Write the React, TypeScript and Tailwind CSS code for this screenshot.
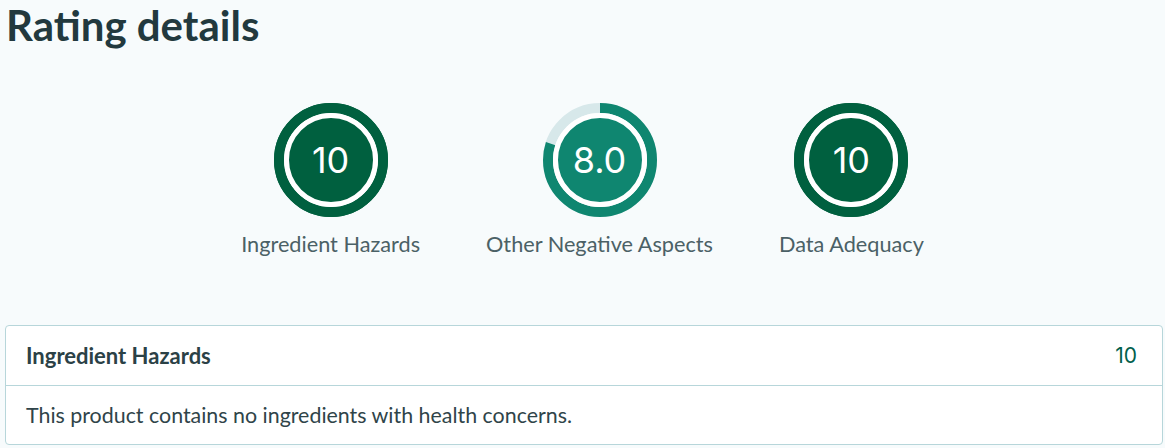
import React from 'react';

type Rating = {
  label: string;
  value: number;
  display: string;
  color: string;
  track: string;
};

const ratings: Rating[] = [
  { label: 'Ingredient Hazards', value: 10, display: '10', color: '#00603f', track: '#00603f' },
  { label: 'Other Negative Aspects', value: 8, display: '8.0', color: '#0f8670', track: '#d7e8ea' },
  { label: 'Data Adequacy', value: 10, display: '10', color: '#00603f', track: '#00603f' },
];

const RatingCircle: React.FC<{ rating: Rating }> = ({ rating }) => {
  const r = 52;
  const circumference = 2 * Math.PI * r;
  const progress = (rating.value / 10) * circumference;

  return (
    <div className="relative w-[116px] h-[116px]">
      <svg width="116" height="116" viewBox="0 0 116 116">
        <circle cx="58" cy="58" r={r} fill="none" stroke={rating.track} strokeWidth="10" />
        <circle
          cx="58"
          cy="58"
          r={r}
          fill="none"
          stroke={rating.color}
          strokeWidth="10"
          strokeDasharray={`${progress} ${circumference}`}
          transform="rotate(-90 58 58)"
        />
        <circle cx="58" cy="58" r="44.5" fill={rating.color} stroke="#ffffff" strokeWidth="5" />
      </svg>
      <span
        className="absolute inset-0 flex items-center justify-center text-white text-[36px] leading-none"
        style={{ fontFamily: 'Inter, "Open Sans", sans-serif', fontWeight: 400 }}
      >
        {rating.display}
      </span>
    </div>
  );
};

const App: React.FC = () => {
  return (
    <div
      className="w-[1165px] h-[448px] bg-[#f7fbfc] overflow-hidden"
      style={{ fontFamily: 'Lato, "Noto Sans", sans-serif' }}
    >
      <h1 className="px-[6px] text-[42px] leading-[51px] font-bold text-[#22393e]">Rating details</h1>

      <div className="flex justify-center gap-[66px] mt-[51px]">
        {ratings.map(rating => (
          <div key={rating.label} className="flex flex-col items-center">
            <RatingCircle rating={rating} />
            <span className="mt-[13px] text-[21.7px] leading-[26px] text-[#4b6166]">{rating.label}</span>
          </div>
        ))}
      </div>

      <div className="ml-[5px] mt-[68px] mr-[2px] bg-white border border-[#b7d6da] rounded-[4px]">
        <div className="flex items-center justify-between h-[60px] pl-[20px] pr-[25px] border-b border-[#b7d6da]">
          <span className="text-[22px] font-bold text-[#2b4146]">Ingredient Hazards</span>
          <span
            className="text-[21px] text-[#005f4c]"
            style={{ fontFamily: 'Inter, "Open Sans", sans-serif', fontWeight: 400 }}
          >
            10
          </span>
        </div>
        <div className="h-[58px] flex items-center pl-[20px]">
          <span className="text-[21.4px] text-[#2f4449]">This product contains no ingredients with health concerns.</span>
        </div>
      </div>
    </div>
  );
};

export default App;
